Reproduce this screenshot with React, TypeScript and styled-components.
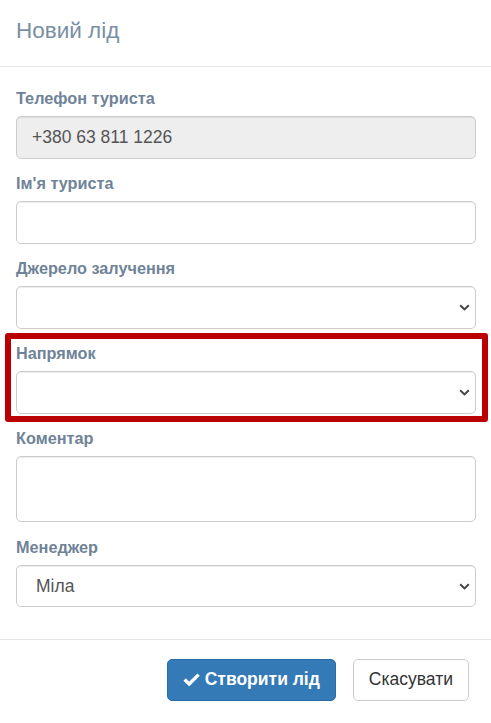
import styled, { createGlobalStyle } from 'styled-components';

const GlobalStyle = createGlobalStyle`
  html, body {
    margin: 0;
    padding: 0;
    background: #fff;
  }

  body {
    font-family: "Liberation Sans", Arial, sans-serif;
    font-size: 17.5px;
    color: #333;
  }

  * {
    box-sizing: border-box;
  }
`;

const Modal = styled.div`
  width: 491px;
  background: #fff;
`;

const Header = styled.div`
  height: 67px;
  padding: 18px 16px 0;
  border-bottom: 1px solid #e5e5e5;
`;

const Title = styled.h4`
  margin: 0;
  font-size: 22.5px;
  line-height: 25px;
  font-weight: 400;
  color: #7a8ea4;
`;

const Body = styled.div`
  padding: 21px 15px 17px 16px;
`;

const Group = styled.div<{ $flush?: boolean }>`
  margin-bottom: ${(p) => (p.$flush ? '0' : '14.5px')};
`;

const Highlight = styled.div`
  margin: -10px -12px 6px -11px;
  padding: 4px 6px 2.5px 5px;
  border: 6px solid #bb0000;
  border-radius: 3px;
`;

const Label = styled.label`
  display: block;
  margin-bottom: 8px;
  font-size: 16.25px;
  line-height: 20px;
  font-weight: 700;
  color: #6f8398;
`;

const fieldBase = `
  display: block;
  width: 100%;
  padding: 7.5px 15px;
  font-family: "Liberation Sans", Arial, sans-serif;
  font-size: 17.5px;
  color: #555;
  background: #fff;
  border: 1px solid #ccc;
  border-radius: 5px;
  box-shadow: inset 0 1px 1px rgba(0, 0, 0, 0.075);
  outline: none;
`;

const Input = styled.input`
  ${fieldBase}
  height: 42.5px;

  &[readonly] {
    background: #eee;
  }
`;

const TextArea = styled.textarea`
  ${fieldBase}
  height: 66px;
  resize: none;
`;

const SelectWrap = styled.div`
  position: relative;
`;

const Select = styled.select`
  ${fieldBase}
  height: 42.5px;
  padding-left: 19px;
  appearance: none;
  -webkit-appearance: none;
`;

const Chevron = styled.svg`
  position: absolute;
  right: 6px;
  top: 50%;
  width: 11px;
  height: 7px;
  margin-top: -3px;
  pointer-events: none;
`;

const Footer = styled.div`
  display: flex;
  justify-content: flex-end;
  gap: 17px;
  padding: 19px 22px 21px 16px;
  border-top: 1px solid #e5e5e5;
`;

const Button = styled.button<{ $primary?: boolean }>`
  display: inline-flex;
  align-items: center;
  gap: 5px;
  height: 42.5px;
  padding: 7.5px 15px;
  font-family: "Liberation Sans", Arial, sans-serif;
  font-size: 17.5px;
  font-weight: ${(p) => (p.$primary ? 700 : 400)};
  color: ${(p) => (p.$primary ? '#fff' : '#333')};
  background: ${(p) => (p.$primary ? '#337ab7' : '#fff')};
  border: 1px solid ${(p) => (p.$primary ? '#2e6da4' : '#ccc')};
  border-radius: 5px;
  cursor: pointer;
`;

const CheckIcon = () => (
  <svg width="17" height="13" viewBox="0 0 17 13">
    <path d="M1.6 6.6 L6.2 11 L15.6 1.6" fill="none" stroke="#fff" strokeWidth="3.4" />
  </svg>
);

const DropSelect = ({ value, options }: { value: string; options: [string, string][] }) => (
  <SelectWrap>
    <Select defaultValue={value}>
      {options.map(([v, t]) => (
        <option key={v} value={v}>{t}</option>
      ))}
    </Select>
    <Chevron viewBox="0 0 11 7">
      <path d="M1.2 1.2 L5.5 5.4 L9.8 1.2" fill="none" stroke="#444" strokeWidth="2" />
    </Chevron>
  </SelectWrap>
);

export default () => {
  return (
    <>
      <GlobalStyle />
      <Modal>
        <Header>
          <Title>Новий лід</Title>
        </Header>
        <Body>
          <Group>
            <Label>Телефон туриста</Label>
            <Input readOnly defaultValue="+380 63 811 1226" />
          </Group>
          <Group>
            <Label>Ім'я туриста</Label>
            <Input />
          </Group>
          <Group>
            <Label>Джерело залучення</Label>
            <DropSelect value="" options={[['', '']]} />
          </Group>
          <Highlight>
            <Group $flush>
              <Label>Напрямок</Label>
              <DropSelect value="" options={[['', '']]} />
            </Group>
          </Highlight>
          <Group>
            <Label>Коментар</Label>
            <TextArea />
          </Group>
          <Group>
            <Label>Менеджер</Label>
            <DropSelect value="mila" options={[['mila', 'Міла']]} />
          </Group>
        </Body>
        <Footer>
          <Button $primary>
            <CheckIcon />
            Створити лід
          </Button>
          <Button>Скасувати</Button>
        </Footer>
      </Modal>
    </>
  );
};
